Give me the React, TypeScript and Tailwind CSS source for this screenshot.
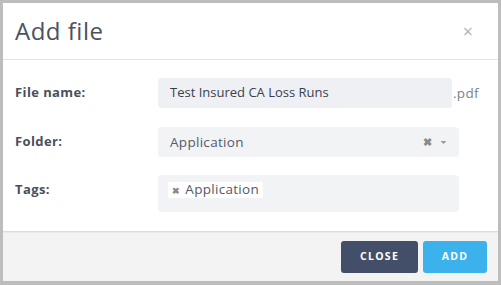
import React from "react";

export default function App() {
  const font = { fontFamily: '"Open Sans", "Noto Sans", sans-serif' };
  return (
    <div className="w-[501px] h-[285px] bg-[#bdbdbd] pt-[3px] pl-[3px] pr-[3px] pb-[4px]" style={font}>
      <div className="flex flex-col h-full bg-white">
        <div className="h-[57px] flex items-center justify-between pl-[12px] pr-[25px] border-b border-[#e5e5e5]">
          <span className="text-[24px] text-[#4b5162] tracking-[0.5px]">Add file</span>
          <span className="text-[18px] text-[#b4b4b4] leading-none">×</span>
        </div>
        <div className="flex-1 flex flex-col pt-[18px] pl-[12px] border-b border-[#dcdcdc]">
          <div className="flex items-center h-[30px]">
            <div className="w-[143px] text-[13px] font-bold text-[#4a4f5c] tracking-[0.4px]">File name:</div>
            <div className="w-[294px] h-[30px] rounded-[4px] bg-[#eff0f3] flex items-center px-[12px] text-[13px] text-[#3a3f4c]">
              Test Insured CA Loss Runs
            </div>
            <span className="ml-[1px] text-[13.5px] text-[#7a7f8c] tracking-[0.3px]">.pdf</span>
          </div>
          <div className="flex items-center h-[30px] mt-[19px]">
            <div className="w-[143px] text-[13px] font-bold text-[#4a4f5c] tracking-[0.4px]">Folder:</div>
            <div className="w-[301px] h-[30px] rounded-[4px] bg-[#f2f3f5] flex items-center pl-[12px] pr-[12px] text-[13.5px] text-[#555a66] tracking-[0.3px]">
              <span className="flex-1">Application</span>
              <span className="text-[11px] text-[#8a8a8a] font-bold mr-[8px]">✖</span>
              <svg width="7" height="5" viewBox="0 0 7 5"><path d="M0.5 1 L3.5 4 L6.5 1 Z" fill="#9a9a9a" /></svg>
            </div>
          </div>
          <div className="flex items-start mt-[18px]">
            <div className="w-[143px] h-[30px] flex items-center text-[13px] font-bold text-[#4a4f5c] tracking-[0.4px]">Tags:</div>
            <div className="w-[301px] h-[37px] rounded-[4px] bg-[#f2f3f5] pt-[7px] pl-[10px] flex items-start">
              <div className="flex items-center h-[16px] bg-white pl-[4px] pr-[4px] text-[13.5px] leading-none text-[#555a66] tracking-[0.3px]">
                <span className="text-[9px] text-[#8a8a8a] font-bold mr-[5px]">✖</span>
                <span>Application</span>
              </div>
            </div>
          </div>
        </div>
        <div className="h-[49px] bg-[#f3f3f3] flex items-center justify-end gap-[5px] pr-[11px] border-t border-[#ebebeb]">
          <button className="w-[77px] h-[32px] rounded-[3px] bg-[#434f69] text-white text-[10.5px] font-bold tracking-[1.3px]">CLOSE</button>
          <button className="w-[64px] h-[32px] rounded-[3px] bg-[#3bb2ec] text-white text-[10.5px] font-bold tracking-[1.3px]">ADD</button>
        </div>
      </div>
    </div>
  );
}
